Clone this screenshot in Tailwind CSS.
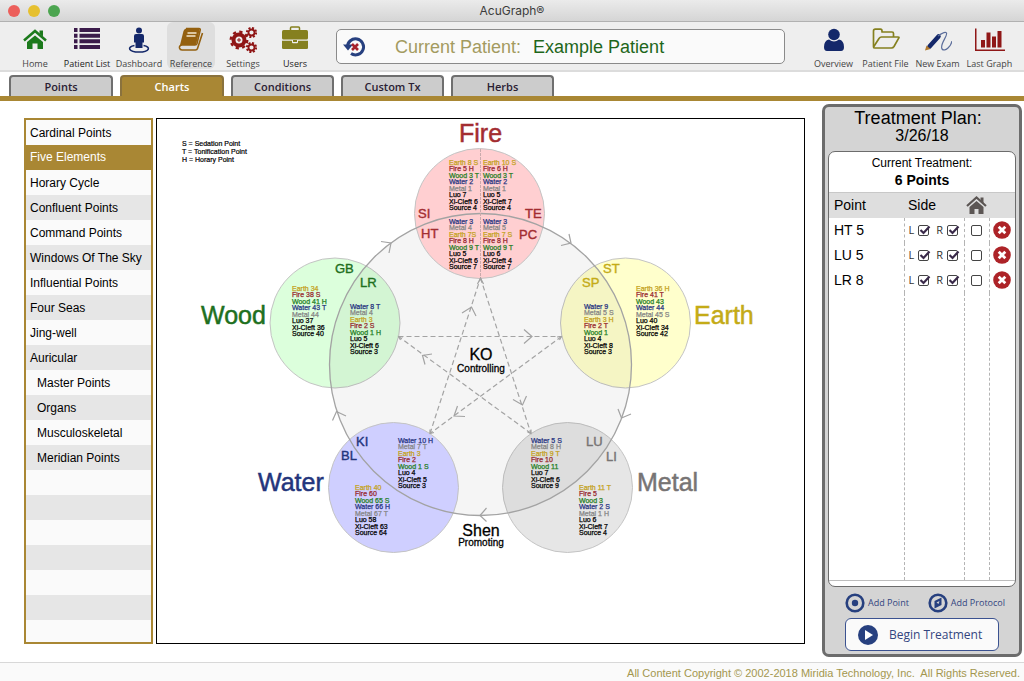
<!DOCTYPE html>
<html lang="en">
<head>
<meta charset="utf-8">
<meta name="viewport" content="width=device-width, initial-scale=1">
<title>AcuGraph</title>
<script src="https://cdn.jsdelivr.net/npm/@tailwindcss/browser@4"></script>
</head>
<body class="flex min-h-screen flex-col bg-white font-['Liberation_Sans',Arial,sans-serif] text-black">

<!-- Window title bar -->
<header class="relative flex h-[22px] shrink-0 items-center justify-center border-b border-[#b1b1b1] bg-linear-to-b from-[#ebebeb] to-[#d5d5d5]">
  <div class="absolute left-2 flex gap-2">
    <span class="size-3 rounded-full bg-[#ec5f5b]"></span>
    <span class="size-3 rounded-full bg-[#e6c02f]"></span>
    <span class="size-3 rounded-full bg-[#4ca550]"></span>
  </div>
  <h1 class="pt-px font-[Inter,sans-serif] text-xs text-[#3c3c3c]">AcuGraph®</h1>
</header>

<!-- Toolbar -->
<div class="flex h-[50px] shrink-0 items-start border-b-2 border-[#dcdcdc] bg-[#eeeeee] px-[11px] font-['Open_Sans',sans-serif] text-[9px] leading-3 text-[#444]">
  <nav class="flex gap-[5px]" aria-label="Main">
    <button class="flex h-[47px] w-[48px] -mr-px flex-col items-center rounded-md pt-1 whitespace-nowrap">
      <svg class="h-8 w-7 shrink-0" viewBox="0 0 28 32" fill="#1c7a1c"><path d="M3 14.500 14 5 25 14.500" fill="none" stroke="#1c7a1c" stroke-width="2.500"/><path d="M18.500 4.500H22v6l-3.500-3zM14 9.500l8 6.500V23h-5.500v-5.500h-5V23H6v-7z"/></svg>
      Home
    </button>
    <button class="flex h-[47px] w-[48px] -mr-px flex-col items-center rounded-md pt-1 whitespace-nowrap text-[#222]">
      <svg class="h-8 w-7 shrink-0" viewBox="0 0 28 32" fill="#3a1a4a"><path d="M1 2h3.500v4H1zM6.500 2H27v4H6.500zM1 7.700h3.500v4H1zM6.500 7.700H27v4H6.500zM1 13.300h3.500v4H1zM6.500 13.300H27v4H6.500zM1 19h3.500v4H1zM6.500 19H27v4H6.500z"/></svg>
      Patient List
    </button>
    <button class="flex h-[47px] w-[48px] -mr-px flex-col items-center rounded-md pt-1 whitespace-nowrap">
      <svg class="h-8 w-7 shrink-0" viewBox="0 0 28 32" fill="#14286a"><circle cx="14" cy="4.500" r="3"/><path d="M11 8h6q2 0 2 2v6.500h-1.500V22h-7v-5.500H9V10q0-2 2-2z"/><path d="M9.500 19.500c-8 1.500-6 6.500 4.500 6.500s12.500-5 4.500-6.500" fill="none" stroke="#14286a" stroke-width="1.600"/></svg>
      Dashboard
    </button>
    <button class="flex h-[47px] w-[48px] -mr-px flex-col items-center rounded-md bg-[#dedede] pt-1 whitespace-nowrap" aria-current="page">
      <svg class="h-8 w-7 shrink-0" viewBox="0 0 28 32"><path d="M9 2.500h13q1.500 0 1.200 1.500L20 17.500q-.4 1.500-2 1.500H5q-3 .5-2.500 3 .5 2 2.500 2h13.500q1.500 0 2-1.500L25.500 7" fill="none" stroke="#94600f" stroke-width="1.600"/><path d="M9 2.500h14L19 19H5q-1.500 0-2.500 2L6.500 5q.5-2 2.500-2.500z" fill="#94600f"/><path d="M10.500 7h9M9.500 10h9" stroke="#f3e7cf" stroke-width="1.500"/></svg>
      Reference
    </button>
    <button class="flex h-[47px] w-[48px] -mr-px flex-col items-center rounded-md pt-1 whitespace-nowrap">
      <svg class="h-8 w-7 shrink-0" viewBox="0 0 28 32" fill="none" stroke="#8f1515"><circle cx="10" cy="14" r="5.500" stroke-width="4"/><circle cx="10" cy="14" r="8.300" stroke-width="2.300" stroke-dasharray="3.260 3.260"/><path d="M10 12v4M8 14h4" stroke-width="1"/><circle cx="22.500" cy="6.500" r="3" stroke-width="1.800"/><circle cx="22.500" cy="6.500" r="4.600" stroke-width="2" stroke-dasharray="2 1.610"/><circle cx="22.500" cy="21.500" r="3" stroke-width="1.800"/><circle cx="22.500" cy="21.500" r="4.600" stroke-width="2" stroke-dasharray="2 1.610"/></svg>
      Settings
    </button>
    <button class="flex h-[47px] w-[48px] -mr-px flex-col items-center rounded-md pt-1 whitespace-nowrap text-[#222]">
      <svg class="h-8 w-7 shrink-0" viewBox="0 0 28 32" fill="#85801f"><path d="M9.500 4.500V2q0-1 1-1h7q1 0 1 1v2.500" fill="none" stroke="#85801f" stroke-width="1.500"/><rect x="1" y="4" width="26" height="9.500" rx="1.500"/><path d="M1 14.800h10v1.500q0 1 1 1h4q1 0 1-1v-1.500h10V22q0 1-1.500 1h-23Q1 23 1 22z"/><rect x="12" y="14" width="4" height="2"/></svg>
      Users
    </button>
  </nav>

  <section class="mt-[7px] mr-[25px] ml-[18px] flex h-[35px] flex-1 items-center rounded-[5px] border border-[#8a8a8a] bg-[#fafafa] pl-[6px] font-['Liberation_Sans',Arial,sans-serif] text-lg">
    <button aria-label="Clear patient">
      <svg class="size-6" viewBox="0 0 24 24"><path d="M4.500 12A8 8 0 1 1 8 18.500" fill="none" stroke="#27407f" stroke-width="3"/><path d="M0 9.500h10L5 15.500z" fill="#27407f"/><path d="m9 9 6 6M15 9l-6 6" stroke="#a8232b" stroke-width="2.600"/></svg>
    </button>
    <span class="ml-7 text-[#a39b60]">Current Patient:</span>
    <span class="ml-3 text-[#1e661a]">Example Patient</span>
  </section>

  <nav class="flex gap-[5px]" aria-label="Patient">
    <button class="flex h-[47px] w-[47px] flex-col items-center pt-1 whitespace-nowrap">
      <svg class="h-8 w-7 shrink-0" viewBox="0 0 28 32" fill="#14286a"><circle cx="14" cy="8.500" r="5.800"/><path d="M9 13.500q5 4 10 0 5 1 5 7.500 0 4-3 4H7q-3 0-3-4 0-6.500 5-7.500z"/></svg>
      Overview
    </button>
    <button class="flex h-[47px] w-[47px] flex-col items-center pt-1 whitespace-nowrap">
      <svg class="h-8 w-7 shrink-0" viewBox="0 0 28 32" fill="none" stroke="#85801f" stroke-width="1.700" stroke-linejoin="round"><path d="M1.500 20.500V5q0-1.800 1.800-1.800h5.200q1.500 0 1.500 1.800v1h10q1.500 0 1.500 1.500V11"/><path d="M1.500 21 7 12.500q1-1.500 2.500-1.500H26q1.500 0 .7 1.200L22 20.500q-1 1.500-2.500 1.500H3q-1.500 0-1.500-1z"/></svg>
      Patient File
    </button>
    <button class="flex h-[47px] w-[47px] flex-col items-center pt-1 whitespace-nowrap">
      <svg class="h-8 w-7 shrink-0" viewBox="0 0 28 32"><path d="M14.500 10.500 5.500 20.500" stroke="#14286a" stroke-width="4.500" stroke-linecap="round"/><path d="m1 24.500 1.500-5L6.500 23z" fill="#b0792d"/><path d="M14 10q7-5 8.500-3c1.500 3-7 11-4.500 16 3 3.500 9-3 10-8" fill="none" stroke="#5b6d9b" stroke-width="1.200"/></svg>
      New Exam
    </button>
    <button class="flex h-[47px] w-[47px] flex-col items-center pt-1 whitespace-nowrap">
      <svg class="h-8 w-[30px] shrink-0" viewBox="0 0 30 32" fill="#8f1717"><path d="M0 2.500h1.500v21H30V25H0zM6 14h4v7.500H6zM11.500 6.500h4v15h-4zM17 10.500h4v11h-4zM22.500 5h4v16.500h-4z"/></svg>
      Last Graph
    </button>
  </nav>
</div>

<!-- Tabs -->
<nav class="flex h-[29px] shrink-0 items-end gap-[7px] border-b-[5px] border-[#a98734] pl-[9px] font-['Open_Sans',sans-serif] text-[11px] font-semibold text-[#2a2033]" aria-label="Reference sections">
  <button class="h-[21px] w-[104px] rounded-t-[4px] border-2 border-b-0 border-[#6f6f6f] bg-[#cccccc] leading-[17px]">Points</button>
  <button class="h-[21px] w-[104px] rounded-t-[4px] border-2 border-b-0 border-[#8a723d] bg-[#a98734] leading-[17px] text-white" aria-current="page">Charts</button>
  <button class="h-[21px] w-[103px] rounded-t-[4px] border-2 border-b-0 border-[#6f6f6f] bg-[#cccccc] leading-[17px]">Conditions</button>
  <button class="h-[21px] w-[103px] rounded-t-[4px] border-2 border-b-0 border-[#6f6f6f] bg-[#cccccc] leading-[17px]">Custom Tx</button>
  <button class="h-[21px] w-[103px] rounded-t-[4px] border-2 border-b-0 border-[#6f6f6f] bg-[#cccccc] leading-[17px]">Herbs</button>
</nav>

<main class="flex flex-1 items-start pr-[2px] pb-[5px] pl-6">
  <!-- Chart list -->
  <ul class="mt-[17px] w-[129px] shrink-0 border-2 border-[#a98734] text-xs leading-[25px]">
    <li class="h-[25px] bg-[#fafafa]"><button class="block w-full pt-px pl-1 text-left">Cardinal Points</button></li>
    <li class="h-[25px] bg-[#a98734] text-white"><button class="block w-full pl-1 text-left" aria-current="true">Five Elements</button></li>
    <li class="h-[25px] bg-[#fafafa]"><button class="block w-full pt-px pl-1 text-left">Horary Cycle</button></li>
    <li class="h-[25px] bg-[#e6e6e6]"><button class="block w-full pt-px pl-1 text-left">Confluent Points</button></li>
    <li class="h-[25px] bg-[#fafafa]"><button class="block w-full pt-px pl-1 text-left">Command Points</button></li>
    <li class="h-[25px] bg-[#e6e6e6]"><button class="block w-full pt-px pl-1 text-left whitespace-nowrap">Windows Of The Sky</button></li>
    <li class="h-[25px] bg-[#fafafa]"><button class="block w-full pt-px pl-1 text-left">Influential Points</button></li>
    <li class="h-[25px] bg-[#e6e6e6]"><button class="block w-full pt-px pl-1 text-left">Four Seas</button></li>
    <li class="h-[25px] bg-[#fafafa]"><button class="block w-full pt-px pl-1 text-left">Jing-well</button></li>
    <li class="h-[25px] bg-[#e6e6e6]"><button class="block w-full pt-px pl-1 text-left">Auricular</button></li>
    <li class="h-[25px] bg-[#fafafa]"><button class="block w-full pt-px pl-[11px] text-left">Master Points</button></li>
    <li class="h-[25px] bg-[#e6e6e6]"><button class="block w-full pt-px pl-[11px] text-left">Organs</button></li>
    <li class="h-[25px] bg-[#fafafa]"><button class="block w-full pt-px pl-[11px] text-left">Musculoskeletal</button></li>
    <li class="h-[25px] bg-[#e6e6e6]"><button class="block w-full pt-px pl-[11px] text-left">Meridian Points</button></li>
    <li class="h-[25px] bg-[#fafafa]"></li>
    <li class="h-[25px] bg-[#e6e6e6]"></li>
    <li class="h-[25px] bg-[#fafafa]"></li>
    <li class="h-[25px] bg-[#e6e6e6]"></li>
    <li class="h-[25px] bg-[#fafafa]"></li>
    <li class="h-[25px] bg-[#e6e6e6]"></li>
    <li class="h-[22px] bg-[#fafafa]"></li>
  </ul>

  <!-- Five elements diagram -->
  <figure class="mt-[17px] mr-[17px] ml-[3px] min-w-0 flex-1 border border-black">
    <svg id="chart" class="block h-auto w-full" viewBox="157 119 647 524" role="img" aria-label="Five Elements chart">
      <g stroke="#c4c4c4">
        <circle cx="335" cy="323" r="65" fill="#dcffdc"/>
        <circle cx="625.500" cy="323" r="65" fill="#ffffcc"/>
        <circle cx="567.500" cy="487.500" r="65" fill="#e6e6e6"/>
        <circle cx="480.500" cy="364.500" r="151" fill="#000" fill-opacity=".04" stroke="none"/>
        <circle cx="479.500" cy="213.500" r="65" fill="#ffcfd1"/>
        <circle cx="393.500" cy="487.500" r="65" fill="#cfcfff"/>
      </g>
      <circle cx="480.500" cy="364.500" r="151" fill="none" stroke="#a3a3a3" stroke-width="1.300"/>
      <path d="M480.500 149v129" stroke="#c9aaac" stroke-dasharray="3 1"/>
      <g fill="none" stroke="#a3a3a3" stroke-width="1.200">
        <path stroke-dasharray="5 3" d="M480.500 278 531 433.500M430 433.500 480.500 278M398.500 336.500h163M561.500 336.500 430 433.500M531 433.500 398.500 336.500"/>
        <path d="m524 329.500 8 7-8 7M457.500 406l-3.500 10 11 .5M513 399.500l9.500 5.500 4-9M462 313l9.500-6 4.500 9M432 354l-9.500 1.500 2.500 9"/>
        <path d="m381 241.500 10 1.500-2 10M561 245.500l10-2.500-2-9M631 414l-9.500 4-3.500-9M486.500 508l-6.500 7.500 6.500 6M332.500 420.500l4-9 9.500 4.500"/>
        <path d="m477.500 284 3-6 3 6M403 337l-4.500-.5 2 3.500M557 337l4.500-.5-2 3.500M430 429.500v4l4-1M527.500 432l3.500 1.500v-4"/>
      </g>
      <g class="text-[25px]" stroke-width=".5">
        <text x="459" y="142" class="fill-[#a32d31] stroke-[#a32d31]">Fire</text>
        <text x="201" y="324" class="fill-[#1e701e] stroke-[#1e701e]">Wood</text>
        <text x="694" y="324" class="fill-[#c4ab17] stroke-[#c4ab17]">Earth</text>
        <text x="258" y="491" class="fill-[#23357c] stroke-[#23357c]">Water</text>
        <text x="637" y="491" class="fill-[#777474] stroke-[#777474]">Metal</text>
      </g>
      <g class="text-[13px]" stroke-width=".4">
        <g class="fill-[#a32d31] stroke-[#a32d31]"><text x="418" y="218">SI</text><text x="525" y="218">TE</text><text x="421" y="238">HT</text><text x="519" y="239">PC</text></g>
        <g class="fill-[#1e701e] stroke-[#1e701e]"><text x="335" y="273">GB</text><text x="360" y="287">LR</text></g>
        <g class="fill-[#c4ab17] stroke-[#c4ab17]"><text x="603" y="273">ST</text><text x="582" y="287">SP</text></g>
        <g class="fill-[#23357c] stroke-[#23357c]"><text x="356" y="446">KI</text><text x="341" y="460">BL</text></g>
        <g class="fill-[#777474] stroke-[#777474]"><text x="586" y="446">LU</text><text x="606" y="461">LI</text></g>
      </g>
      <g text-anchor="middle" class="stroke-black" stroke-width=".3">
        <text x="481" y="360" class="text-[16px]">KO</text>
        <text x="481" y="372" class="text-[10px]">Controlling</text>
        <text x="481" y="536" class="text-[16px]">Shen</text>
        <text x="481" y="546" class="text-[10px]">Promoting</text>
      </g>
      <g class="stroke-black text-[7px]" stroke-width=".2">
        <text x="182" y="146">S = Sedation Point</text>
        <text x="182" y="154">T = Tonification Point</text>
        <text x="182" y="162">H = Horary Point</text>
      </g>
      <g id="points" class="text-[7px]" stroke-width=".25"></g>
    </svg>
  </figure>

  <!-- Treatment plan -->
  <aside class="mt-[3px] w-[200px] shrink-0 rounded-[7px] border-[3px] border-[#6c6c6c] bg-[#d4d4d4] px-[3px] pb-[3px]">
    <h2 class="mt-[2px] mr-2 text-center text-lg leading-[18px]">Treatment Plan:</h2>
    <p class="text-center text-base leading-[18px]">3/26/18</p>
    <div class="mt-[6px] overflow-hidden rounded-[7px] border border-[#6c6c6c] bg-white pb-[5px]">
      <p class="pt-[2px] text-center text-xs leading-[18px]">Current Treatment:</p>
      <p class="mb-[3px] text-center text-sm leading-[17px] font-bold">6 Points</p>
      <table class="w-full table-fixed border-collapse border-b border-[#bdbdbd] text-sm">
        <thead>
          <tr class="h-[25px] border-t border-[#c8c8c8] bg-[#dedede] text-left">
            <th class="w-[75px] pl-[5px] font-normal">Point</th>
            <th class="w-[60px] pl-[4px] font-normal">Side</th>
            <th class="w-[25px]"><svg class="mx-auto size-[21px]" viewBox="0 0 21 21" fill="#5c5654" role="img" aria-label="Home"><path d="m1 11 9.500-8.500L20 11" fill="none" stroke="#5c5654" stroke-width="2.200"/><path d="M14.500 2.500h3v6l-3-3zM10.500 6l7 6v7h-5v-5h-4v5h-5v-7z"/></svg></th>
            <th></th>
          </tr>
        </thead>
        <tbody id="plan"></tbody>
      </table>
    </div>
    <div class="mt-[6px] flex justify-between pr-[11px] pl-[17px] font-['Open_Sans',sans-serif] text-[9px] whitespace-nowrap text-[#33457f]">
      <button class="flex items-center gap-[3px]"><svg class="size-5" viewBox="0 0 20 20"><circle cx="10" cy="10" r="8.300" fill="none" stroke="#27407f" stroke-width="2.600"/><circle cx="10" cy="10" r="3.200" fill="#27407f"/></svg>Add Point</button>
      <button class="flex items-center gap-[3px]"><svg class="size-5" viewBox="0 0 20 20"><circle cx="10" cy="10" r="8.300" fill="none" stroke="#27407f" stroke-width="2.600"/><path d="m6.500 8 7-3.500V12l-7 3.500z" fill="#27407f"/><path d="m8.500 9.500 3-1.500-1 3z" fill="#d4d4d4"/></svg>Add Protocol</button>
    </div>
    <button class="mx-[17px] mt-[5px] flex h-[33px] w-[154px] items-center rounded-[6px] border border-[#3b5290] bg-[#fafafa] pl-3 font-['Open_Sans',sans-serif] text-xs whitespace-nowrap text-[#33457f]">
      <svg class="mr-[11px] size-5" viewBox="0 0 20 20"><circle cx="10" cy="10" r="10" fill="#27407f"/><path d="m7 5 8 5-8 5z" fill="#fff"/></svg>Begin Treatment
    </button>
  </aside>
</main>

<footer class="h-[19px] shrink-0 border-t border-[#d8d8d8] bg-[#fafafa] pr-1 text-right text-[11px] leading-[20px] whitespace-pre text-[#a3974e]">All Content Copyright © 2002-2018 Miridia Technology, Inc.  All Rights Reserved.</footer>

<template id="plan-row">
  <tr class="h-[25px]">
    <td class="border-r border-dashed border-[#b4b4b4] pl-[5px]" data-name></td>
    <td class="border-r border-dashed border-[#b4b4b4] pl-1">
      <div class="flex gap-[5px] font-['Open_Sans',sans-serif] text-[11px] leading-[14px] text-[#333]">
        <label class="flex items-center gap-1">L<span class="grid"><input type="checkbox" checked class="peer size-[11px] appearance-none self-center rounded-[2px] border border-[#444] [grid-area:1/1]"><svg class="invisible size-[13px] peer-checked:visible [grid-area:1/1]" viewBox="0 0 13 13" fill="none" stroke="#3a2a4a" stroke-width="2.200"><path d="M2.500 6 5.500 9 11.500 2.500"/></svg></span></label>
        <label class="flex items-center gap-1">R<span class="grid"><input type="checkbox" checked class="peer size-[11px] appearance-none self-center rounded-[2px] border border-[#444] [grid-area:1/1]"><svg class="invisible size-[13px] peer-checked:visible [grid-area:1/1]" viewBox="0 0 13 13" fill="none" stroke="#3a2a4a" stroke-width="2.200"><path d="M2.500 6 5.500 9 11.500 2.500"/></svg></span></label>
      </div>
    </td>
    <td class="border-r border-dashed border-[#b4b4b4]"><input type="checkbox" aria-label="Home treatment" class="mx-auto block size-[11px] appearance-none rounded-[2px] border border-[#444]"></td>
    <td><button class="mx-auto block size-[18px]" aria-label="Remove point"><svg viewBox="0 0 18 18"><circle cx="9" cy="9" r="8.800" fill="#ad2328"/><path d="m5.700 5.700 6.600 6.600M12.300 5.700l-6.600 6.600" stroke="#fff" stroke-width="2.800"/></svg></button></td>
  </tr>
</template>
<template id="plan-filler">
  <tr class="h-[288px]">
    <td class="border-r border-dashed border-[#b4b4b4]"></td>
    <td class="border-r border-dashed border-[#b4b4b4]"></td>
    <td class="border-r border-dashed border-[#b4b4b4]"></td>
    <td></td>
  </tr>
</template>

<script>
  const colors = {
    Earth: 'fill-[#c4a21d] stroke-[#c4a21d]', Fire: 'fill-[#96262c] stroke-[#96262c]', Wood: 'fill-[#1f7d24] stroke-[#1f7d24]',
    Water: 'fill-[#26337f] stroke-[#26337f]', Metal: 'fill-[#858585] stroke-[#858585]'
  };
  // Each meridian: left edge, first baseline, and its eight points.
  const meridians = [
    [449, 165, 'Earth 8 S|Fire 5 H|Wood 3 T|Water 2|Metal 1|Luo 7|Xi-Cleft 6|Source 4'],
    [483, 165, 'Earth 10 S|Fire 6 H|Wood 3 T|Water 2|Metal 1|Luo 5|Xi-Cleft 7|Source 4'],
    [449, 224, 'Water 3|Metal 4|Earth 7S|Fire 8 H|Wood 9 T|Luo 5|Xi-Cleft 6|Source 7'],
    [483, 224, 'Water 3|Metal 5|Earth 7 S|Fire 8 H|Wood 9 T|Luo 6|Xi-Cleft 4|Source 7'],
    [292, 291, 'Earth 34|Fire 38 S|Wood 41 H|Water 43 T|Metal 44|Luo 37|Xi-Cleft 36|Source 40'],
    [350, 309, 'Water 8 T|Metal 4|Earth 3|Fire 2 S|Wood 1 H|Luo 5|Xi-Cleft 6|Source 3'],
    [584, 309, 'Water 9|Metal 5 S|Earth 3 H|Fire 2 T|Wood 1|Luo 4|Xi-Cleft 8|Source 3'],
    [636, 291, 'Earth 36 H|Fire 41 T|Wood 43|Water 44|Metal 45 S|Luo 40|Xi-Cleft 34|Source 42'],
    [398, 443, 'Water 10 H|Metal 7 T|Earth 3|Fire 2|Wood 1 S|Luo 4|Xi-Cleft 5|Source 3'],
    [355, 490, 'Earth 40|Fire 60|Wood 65 S|Water 66 H|Metal 67 T|Luo 58|Xi-Cleft 63|Source 64'],
    [531, 443, 'Water 5 S|Metal 8 H|Earth 9 T|Fire 10|Wood 11|Luo 7|Xi-Cleft 6|Source 9'],
    [579, 490, 'Earth 11 T|Fire 5|Wood 3|Water 2 S|Metal 1 H|Luo 6|Xi-Cleft 7|Source 4']
  ];
  const points = document.getElementById('points');
  for (const [x, y, list] of meridians) {
    list.split('|').forEach((label, i) => {
      const t = document.createElementNS('http://www.w3.org/2000/svg', 'text');
      t.setAttribute('x', x);
      t.setAttribute('y', y + Math.round(i * 45 / 7));
      t.setAttribute('class', colors[label.split(' ')[0]] || 'fill-black stroke-black');
      t.textContent = label;
      points.append(t);
    });
  }

  const plan = document.getElementById('plan');
  for (const name of ['HT 5', 'LU 5', 'LR 8']) {
    const row = document.getElementById('plan-row').content.cloneNode(true);
    row.querySelector('[data-name]').textContent = name;
    plan.append(row);
  }
  plan.append(document.getElementById('plan-filler').content.cloneNode(true));
</script>
</body>
</html>
